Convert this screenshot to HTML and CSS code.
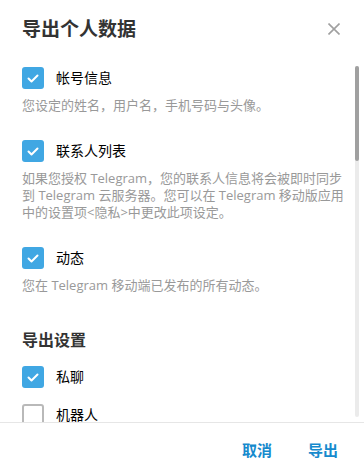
FILE: index.html
```html
<!DOCTYPE html>
<html lang="zh-CN">
<head>
<meta charset="utf-8">
<link rel="stylesheet" href="styles.css">
</head>
<body>
<div class="dialog">
  <div class="header">
    <div class="title">导出个人数据</div>
    <svg class="close" width="12" height="12" viewBox="0 0 12 12"><path d="M0.5 0.5 L11.5 11.5 M11.5 0.5 L0.5 11.5" stroke="#a0a0a0" stroke-width="1.6" fill="none"/></svg>
  </div>
  <div class="body">
    <div class="content">
      <div class="option">
        <div class="row"><span class="cb on"><svg viewBox="0 0 22 22"><path d="M6.5 11.5 L9.5 14.5 L15.5 8.5" stroke="#fff" stroke-width="2" fill="none" stroke-linecap="round" stroke-linejoin="round"/></svg></span><span class="label">帐号信息</span></div>
        <p class="desc">您设定的姓名，用户名，手机号码与头像。</p>
      </div>
      <div class="option">
        <div class="row"><span class="cb on"><svg viewBox="0 0 22 22"><path d="M6.5 11.5 L9.5 14.5 L15.5 8.5" stroke="#fff" stroke-width="2" fill="none" stroke-linecap="round" stroke-linejoin="round"/></svg></span><span class="label">联系人列表</span></div>
        <p class="desc">如果您授权 Telegram，您的联系人信息将会被即时同步<br>到 Telegram 云服务器。您可以在 Telegram 移动版应用<br>中的设置项&lt;隐私&gt;中更改此项设定。</p>
      </div>
      <div class="option last">
        <div class="row"><span class="cb on"><svg viewBox="0 0 22 22"><path d="M6.5 11.5 L9.5 14.5 L15.5 8.5" stroke="#fff" stroke-width="2" fill="none" stroke-linecap="round" stroke-linejoin="round"/></svg></span><span class="label">动态</span></div>
        <p class="desc">您在 Telegram 移动端已发布的所有动态。</p>
      </div>
      <div class="section">导出设置</div>
      <div class="row plain"><span class="cb on"><svg viewBox="0 0 22 22"><path d="M6.5 11.5 L9.5 14.5 L15.5 8.5" stroke="#fff" stroke-width="2" fill="none" stroke-linecap="round" stroke-linejoin="round"/></svg></span><span class="label">私聊</span></div>
      <div class="row plain"><span class="cb off"></span><span class="label">机器人</span></div>
    </div>
    <div class="scrollbar"><div class="thumb"></div></div>
  </div>
  <div class="footer">
    <span class="btn">取消</span>
    <span class="btn">导出</span>
  </div>
</div>
</body>
</html>
```
FILE: styles.css
```css
html, body {
  margin: 0;
  padding: 0;
  background: #ffffff;
}
body {
  font-family: "Open Sans", "Noto Sans CJK SC", sans-serif;
}
.dialog {
  width: 364px;
  height: 476px;
  display: flex;
  flex-direction: column;
  background: #fff;
  overflow: hidden;
}
.header {
  height: 58px;
  flex: none;
  display: flex;
  align-items: center;
  justify-content: space-between;
  padding: 0 24px 0 22px;
}
.title {
  font-size: 19px;
  font-weight: 700;
  color: #333333;
  line-height: 24px;
}
.close {
  display: block;
}
.body {
  flex: 1;
  position: relative;
  overflow: hidden;
}
.content {
  padding: 9px 8px 0 22px;
}
.option {
  margin-bottom: 26px;
}
.option.last {
  margin-bottom: 0;
}
.row {
  display: flex;
  align-items: center;
  height: 22px;
}
.row.plain {
  margin-bottom: 16px;
}
.cb {
  width: 22px;
  height: 22px;
  border-radius: 3px;
  box-sizing: border-box;
  flex: none;
  display: block;
}
.cb svg {
  display: block;
  width: 22px;
  height: 22px;
}
.cb.on {
  background: #40a7e3;
}
.cb.off {
  border: 2px solid #b9b9b9;
  background: #fff;
}
.label {
  margin-left: 12px;
  font-size: 14px;
  color: #000000;
  line-height: 22px;
}
.desc {
  margin: 8px 0 0 0;
  font-size: 13px;
  line-height: 17px;
  color: #999999;
  white-space: nowrap;
}
.section {
  margin-top: 36px;
  margin-bottom: 16px;
  font-size: 16px;
  font-weight: 700;
  line-height: 20px;
  color: #333333;
}
.scrollbar {
  position: absolute;
  right: 5px;
  top: 8px;
  bottom: 5px;
  width: 4px;
  background: #ebebeb;
  border-radius: 2px;
}
.thumb {
  height: 95px;
  background: #a0a0a0;
  border-radius: 2px;
}
.footer {
  height: 53px;
  flex: none;
  border-top: 1px solid #e6e6e6;
  display: flex;
  align-items: center;
  justify-content: flex-end;
  padding: 0 26px 0 0;
  gap: 36px;
}
.btn {
  font-size: 15px;
  font-weight: 700;
  color: #168acd;
  line-height: 20px;
}
```
